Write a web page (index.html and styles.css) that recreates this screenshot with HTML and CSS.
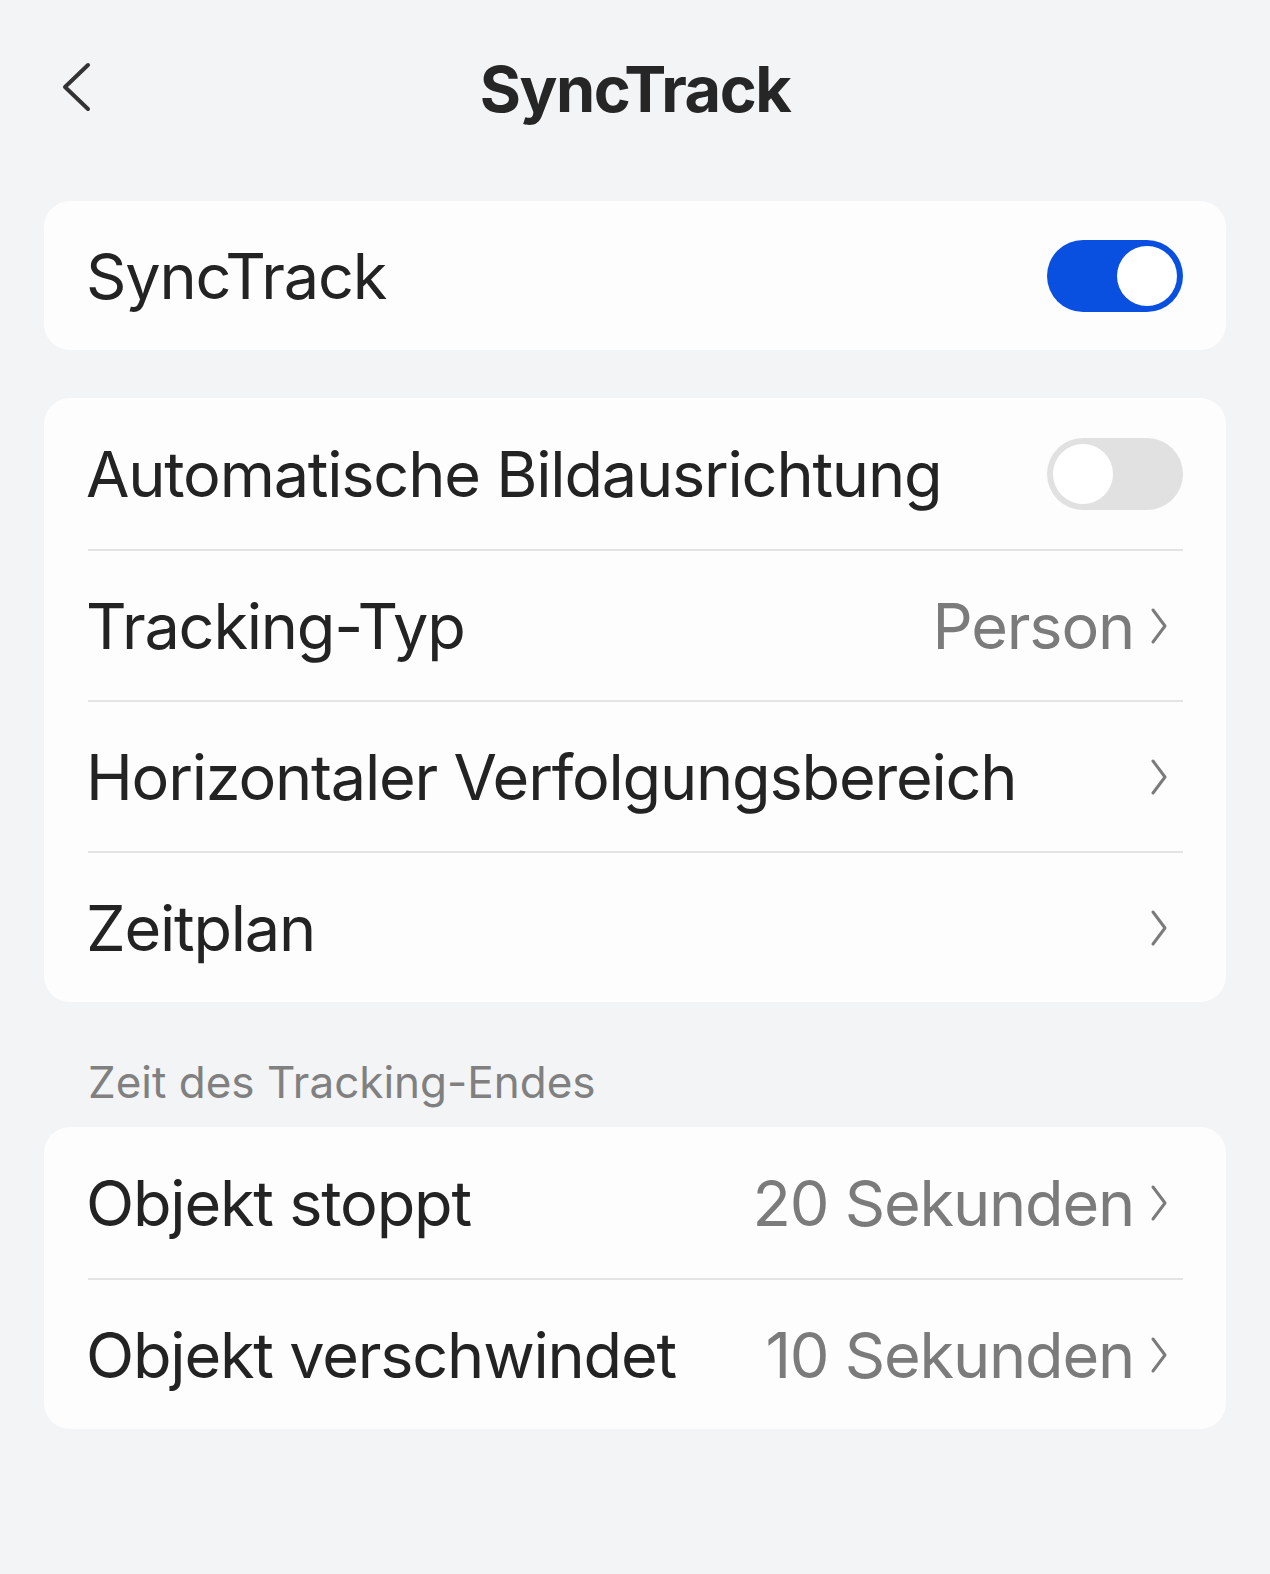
FILE: index.html
```html
<!DOCTYPE html>
<html lang="de">
<head>
    <meta charset="UTF-8">
    <meta name="viewport" content="width=device-width, initial-scale=1.0">
    <title>SyncTrack</title>
    <link rel="stylesheet" href="styles.css">
</head>
<body>
    <div class="page">
        <header class="nav-bar">
            <button class="back-btn" aria-label="Zurück">
                <svg width="32" height="50" viewBox="0 0 32 50">
                    <polyline points="28,3 5,25 28,47" fill="none" stroke="#333" stroke-width="4" stroke-linecap="round" stroke-linejoin="round"/>
                </svg>
            </button>
            <h1>SyncTrack</h1>
        </header>

        <div class="card">
            <div class="row">
                <div class="row-body">
                    <span class="label">SyncTrack</span>
                    <span class="switch on"><span class="knob"></span></span>
                </div>
            </div>
        </div>

        <div class="card">
            <div class="row">
                <div class="row-body">
                    <span class="label">Automatische Bildausrichtung</span>
                    <span class="switch"><span class="knob"></span></span>
                </div>
            </div>
            <div class="row">
                <div class="row-body">
                    <span class="label">Tracking-Typ</span>
                    <span class="value">Person</span>
                    <svg class="chevron" width="18" height="38" viewBox="0 0 18 38"><polyline points="3,3 15,19 3,35" fill="none" stroke="#7b7b7b" stroke-width="3" stroke-linecap="round" stroke-linejoin="round"/></svg>
                </div>
            </div>
            <div class="row">
                <div class="row-body">
                    <span class="label">Horizontaler Verfolgungsbereich</span>
                    <svg class="chevron" width="18" height="38" viewBox="0 0 18 38"><polyline points="3,3 15,19 3,35" fill="none" stroke="#7b7b7b" stroke-width="3" stroke-linecap="round" stroke-linejoin="round"/></svg>
                </div>
            </div>
            <div class="row">
                <div class="row-body">
                    <span class="label">Zeitplan</span>
                    <svg class="chevron" width="18" height="38" viewBox="0 0 18 38"><polyline points="3,3 15,19 3,35" fill="none" stroke="#7b7b7b" stroke-width="3" stroke-linecap="round" stroke-linejoin="round"/></svg>
                </div>
            </div>
        </div>

        <p class="section-label">Zeit des Tracking-Endes</p>

        <div class="card">
            <div class="row">
                <div class="row-body">
                    <span class="label">Objekt stoppt</span>
                    <span class="value">20 Sekunden</span>
                    <svg class="chevron" width="18" height="38" viewBox="0 0 18 38"><polyline points="3,3 15,19 3,35" fill="none" stroke="#7b7b7b" stroke-width="3" stroke-linecap="round" stroke-linejoin="round"/></svg>
                </div>
            </div>
            <div class="row">
                <div class="row-body">
                    <span class="label">Objekt verschwindet</span>
                    <span class="value">10 Sekunden</span>
                    <svg class="chevron" width="18" height="38" viewBox="0 0 18 38"><polyline points="3,3 15,19 3,35" fill="none" stroke="#7b7b7b" stroke-width="3" stroke-linecap="round" stroke-linejoin="round"/></svg>
                </div>
            </div>
        </div>
    </div>
</body>
</html>
```

FILE: styles.css
```css
:root {
    --bg-color: #f3f4f6;
    --card-color: #fdfdfd;
    --text-color: #232323;
    --muted-color: #7b7b7b;
    --line-color: #e4e4e4;
    --blue: #0a50e0;
}

* {
    box-sizing: border-box;
    margin: 0;
    padding: 0;
}

body {
    background-color: var(--bg-color);
    color: var(--text-color);
    font-family: 'Inter', 'Roboto', sans-serif;
    min-height: 1574px;
}

.page {
    padding: 0 44px 100px;
}

.nav-bar {
    position: relative;
    height: 177px;
    display: flex;
    align-items: center;
    justify-content: center;
    margin-bottom: 24px;
}

.back-btn {
    position: absolute;
    left: 16px;
    top: 62px;
    background: none;
    border: none;
    line-height: 0;
}

.nav-bar h1 {
    font-size: 63px;
    font-weight: 700;
    color: #262626;
    letter-spacing: -1.5px;
}

.card {
    background-color: var(--card-color);
    border-radius: 26px;
    margin-bottom: 48px;
}

.row {
    padding: 0 43px 0 44px;
}

.row-body {
    height: 151px;
    display: flex;
    align-items: center;
    border-top: 2px solid var(--line-color);
}

.row:first-child .row-body {
    border-top: none;
}

.card:first-of-type .row-body {
    height: 149px;
}

.label {
    font-size: 63px;
    letter-spacing: -1.2px;
    margin-left: -2px;
    flex: 1;
    white-space: nowrap;
}

.value {
    font-size: 63px;
    letter-spacing: -1.2px;
    color: var(--muted-color);
}

.chevron {
    margin-left: 16px;
    margin-right: 15px;
    flex-shrink: 0;
}

.switch {
    width: 136px;
    height: 72px;
    border-radius: 36px;
    background-color: #e1e1e1;
    padding: 6px;
    display: flex;
    flex-shrink: 0;
}

.switch.on {
    background-color: var(--blue);
    justify-content: flex-end;
}

.knob {
    width: 60px;
    height: 60px;
    border-radius: 50%;
    background-color: #fff;
}

.section-label {
    height: 125px;
    margin-top: -48px;
    padding: 55px 44px 0;
    font-size: 44px;
    line-height: 50px;
    color: #808080;
}
```
